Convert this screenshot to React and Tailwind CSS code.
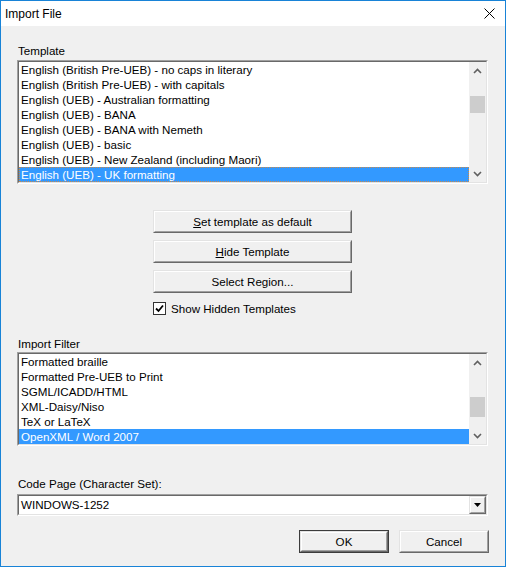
import React from 'react';

const templates = [
  'English (British Pre-UEB) - no caps in literary',
  'English (British Pre-UEB) - with capitals',
  'English (UEB) - Australian formatting',
  'English (UEB) - BANA',
  'English (UEB) - BANA with Nemeth',
  'English (UEB) - basic',
  'English (UEB) - New Zealand (including Maori)',
  'English (UEB) - UK formatting',
];

const filters = [
  'Formatted braille',
  'Formatted Pre-UEB to Print',
  'SGML/ICADD/HTML',
  'XML-Daisy/Niso',
  'TeX or LaTeX',
  'OpenXML / Word 2007',
];

const Chevron = ({ down }) => (
  <svg width="9" height="6" viewBox="0 0 9 6">
    <path d={down ? 'M1 1 L4.5 4.5 L8 1' : 'M1 5 L4.5 1.5 L8 5'} fill="none" stroke="#606060" strokeWidth="1.6" />
  </svg>
);

// sunken 3d frame used by list boxes and the combo
const Sunken = ({ className, children }) => (
  <div className={`border border-t-[#a0a0a0] border-l-[#a0a0a0] border-b-white border-r-white ${className}`}>
    <div className="h-full border border-t-[#696969] border-l-[#696969] border-b-[#e3e3e3] border-r-[#e3e3e3] bg-white">
      {children}
    </div>
  </div>
);

const Raised = ({ className, children }) => (
  <div className={`border border-t-[#e3e3e3] border-l-[#e3e3e3] border-b-[#696969] border-r-[#696969] ${className}`}>
    <div className="h-full border border-t-white border-l-white border-b-[#a0a0a0] border-r-[#a0a0a0] bg-[#f0f0f0] flex items-center justify-center">
      {children}
    </div>
  </div>
);

const ListBox = ({ items, height, thumbTop, thumbHeight, focus }) => (
  <Sunken className={`w-[471px] ${height}`}>
    <div className="flex h-full">
      <div className="flex-1">
        {items.map((t, i) => {
          const selected = i === items.length - 1;
          return (
            <div
              key={t}
              className={
                selected
                  ? `h-[15px] leading-[15px] pl-[2px] bg-[#3399ff] text-white ${focus ? 'outline outline-1 outline-dotted outline-[#c8894a] -outline-offset-1' : ''}`
                  : 'h-[15px] leading-[15px] pl-[2px] whitespace-nowrap overflow-hidden'
              }
            >
              {t}
            </div>
          );
        })}
      </div>
      <div className="w-[17px] bg-[#f0f0f0] flex flex-col">
        <div className="h-[17px] flex items-center justify-center">
          <Chevron />
        </div>
        <div className="flex-1 relative">
          <div className={`absolute left-[1px] w-[15px] bg-[#cdcdcd] ${thumbTop} ${thumbHeight}`} />
        </div>
        <div className="h-[17px] flex items-center justify-center">
          <Chevron down />
        </div>
      </div>
    </div>
  </Sunken>
);

export default function App() {
  return (
    <div
      className="w-[506px] h-[567px] border border-[#1883d7] bg-[#f0f0f0] flex flex-col text-black text-[11.6px]"
      style={{ fontFamily: '"Liberation Sans", Arial, sans-serif' }}
    >
      <div className="h-[25px] bg-white flex items-center justify-between pl-[4px] pr-[10px]">
        <span className="text-[12px]">Import File</span>
        <svg width="11" height="11" viewBox="0 0 11 11">
          <path d="M0.5 0.5 L10.5 10.5 M10.5 0.5 L0.5 10.5" stroke="#000" strokeWidth="1" />
        </svg>
      </div>

      <div className="flex flex-col pl-[16px]">
        <div className="mt-[18px] h-[13px] leading-[13px] pl-[1px]">Template</div>
        <div className="mt-[3px]">
          <ListBox items={templates} height="h-[124px]" thumbTop="top-[17px]" thumbHeight="h-[17px]" focus />
        </div>

        <div className="mt-[26px] ml-[136px] flex flex-col gap-[7px]">
          <Raised className="w-[199px] h-[23px]">
            <span><span className="underline">S</span>et template as default</span>
          </Raised>
          <Raised className="w-[199px] h-[23px]">
            <span><span className="underline">H</span>ide Template</span>
          </Raised>
          <Raised className="w-[199px] h-[23px]">
            <span>Select Region...</span>
          </Raised>
          <div className="mt-[2px] h-[13px] flex items-center">
            <div className="w-[13px] h-[13px] border border-[#333] bg-white flex items-center justify-center">
              <svg width="9" height="9" viewBox="0 0 9 9">
                <path d="M1 4.5 L3.5 7 L8 1.5" fill="none" stroke="#000" strokeWidth="1.8" />
              </svg>
            </div>
            <span className="ml-[5px] leading-[13px]">Show Hidden Templates</span>
          </div>
        </div>

        <div className="mt-[22px] h-[13px] leading-[13px] pl-[1px]">Import Filter</div>
        <div className="mt-[2px]">
          <ListBox items={filters} height="h-[94px]" thumbTop="top-[26px]" thumbHeight="h-[20px]" />
        </div>

        <div className="mt-[31px] h-[13px] leading-[13px] pl-[1px]">Code Page (Character Set):</div>
        <div className="mt-[4px]">
          <Sunken className="w-[471px] h-[22px]">
            <div className="flex h-full items-center">
              <span className="flex-1 pl-[2px]">WINDOWS-1252</span>
              <Raised className="w-[17px] h-[18px]">
                <svg width="7" height="4" viewBox="0 0 7 4">
                  <path d="M0 0 L7 0 L3.5 4 Z" fill="#000" />
                </svg>
              </Raised>
            </div>
          </Sunken>
        </div>

        <div className="mt-[14px] flex justify-end gap-[10px] pr-[16px]">
          <div className="w-[90px] h-[23px] border border-[#3c3c3c]">
            <Raised className="w-full h-full">
              <span>OK</span>
            </Raised>
          </div>
          <Raised className="w-[90px] h-[23px]">
            <span>Cancel</span>
          </Raised>
        </div>
      </div>
    </div>
  );
}
